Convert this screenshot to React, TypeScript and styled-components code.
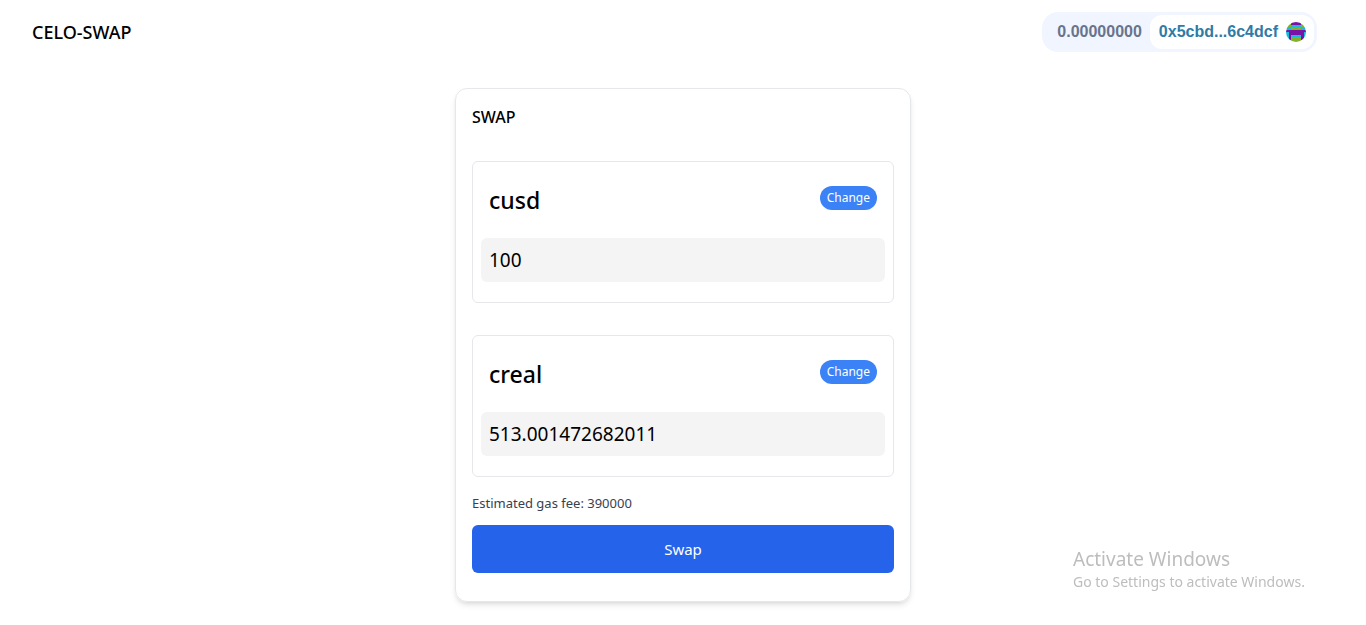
import React, { useState } from "react";
import styled, { createGlobalStyle } from "styled-components";

const GlobalStyle = createGlobalStyle`
  *, *::before, *::after { box-sizing: border-box; }
  body {
    margin: 0;
    background: #fff;
    color: #000;
    font-family: "Segoe UI", "Noto Sans", "Open Sans", sans-serif;
    font-size: 15px;
    line-height: 24px;
  }
  h1, h2, h3, p { margin: 0; font-weight: 500; }
  button, input { font: inherit; border: 0; margin: 0; }
  button { cursor: pointer; }
`;

const Header = styled.header`
  display: flex;
  justify-content: space-between;
  align-items: center;
  padding: 12px 49px 12px 32px;
`;

const Brand = styled.h1`
  font-size: 18px;
  line-height: 28px;
`;

const Wallet = styled.div`
  display: flex;
  align-items: center;
  height: 40px;
  padding: 3px 3px 3px 15px;
  gap: 8px;
  border-radius: 16px;
  background: #f1f5ff;
  font-family: "Liberation Sans", Arial, sans-serif;
  font-size: 16px;
  font-weight: 700;
  color: #68738d;
`;

const Account = styled.button`
  display: flex;
  align-items: center;
  gap: 8px;
  height: 34px;
  padding: 0 8px 0 9px;
  border-radius: 12px;
  background: #fff;
  color: #2e7ba6;
`;

const Card = styled.main`
  width: calc(100% - 32px);
  max-width: 456px;
  margin: 24px auto;
  padding: 16px 16px 28px;
  border: 1px solid #e5e7eb;
  border-radius: 12px;
  box-shadow: 0 4px 6px -1px rgba(0, 0, 0, 0.1), 0 2px 4px -2px rgba(0, 0, 0, 0.1);
`;

const CardTitle = styled.h2`
  margin-bottom: 32px;
  font-size: 16px;
  line-height: 24px;
`;

const TokenBox = styled.section`
  margin-bottom: 32px;
  padding: 8px 8px 20px;
  border: 1px solid #e5e7eb;
  border-radius: 6px;
  &:last-of-type { margin-bottom: 16px; }
`;

const TokenHead = styled.div`
  display: flex;
  justify-content: space-between;
  align-items: flex-start;
  padding: 16px 8px 24px;
`;

const TokenName = styled.h3`
  font-size: 23px;
  line-height: 28px;
`;

const ChangeButton = styled.button`
  height: 24px;
  padding: 0 7px;
  border-radius: 12px;
  background: #3b82f6;
  color: #fff;
  font-size: 12px;
`;

const Amount = styled.input`
  display: block;
  width: 100%;
  height: 44px;
  padding: 8px;
  border-radius: 6px;
  background: #f4f4f4;
  color: #000;
  font-size: 19px;
`;

const GasFee = styled.p`
  margin-bottom: 12px;
  font-size: 13px;
  font-weight: 400;
  line-height: 20px;
  color: #374151;
`;

const SwapButton = styled.button`
  display: block;
  width: 100%;
  height: 48px;
  border-radius: 6px;
  background: #2563eb;
  color: #fff;
`;

const Notice = styled.aside`
  position: fixed;
  right: 57px;
  bottom: 33px;
  min-width: 236px;
  color: #bdbdbd;
  font-size: 14px;
  line-height: 20px;
  pointer-events: none;
`;

const NoticeTitle = styled.div`
  font-size: 19px;
  line-height: 26px;
`;

const colours: Record<string, string> = { p: "#7a12a8", g: "#86b02c", c: "#17bdd8" };
const halfRows = ["ggpp", "ggcc", "ccgg", "pppp", "cppp", "cpcc", "cpgg", "ccgg"];

function Avatar() {
  return (
    <svg width="20" height="20" viewBox="0 0 8 8" aria-hidden="true">
      <defs>
        <clipPath id="round"><circle cx="4" cy="4" r="4" /></clipPath>
      </defs>
      <g clipPath="url(#round)" shapeRendering="crispEdges">
        {halfRows.map((half, y) =>
          [...half, ...half.split("").reverse()].map((c, x) => (
            <rect key={`${x}-${y}`} x={x} y={y} width="1" height="1" fill={colours[c]} />
          ))
        )}
      </g>
    </svg>
  );
}

function TokenField({ name, initial }: { name: string; initial: string }) {
  const [value, setValue] = useState(initial);
  return (
    <TokenBox>
      <TokenHead>
        <TokenName>{name}</TokenName>
        <ChangeButton type="button">Change</ChangeButton>
      </TokenHead>
      <Amount aria-label={`${name} amount`} value={value} onChange={(e) => setValue(e.target.value)} />
    </TokenBox>
  );
}

export default function App() {
  return (
    <>
      <GlobalStyle />
      <Header>
        <Brand>CELO-SWAP</Brand>
        <Wallet>
          <span>0.00000000</span>
          <Account type="button">
            0x5cbd...6c4dcf
            <Avatar />
          </Account>
        </Wallet>
      </Header>
      <Card>
        <CardTitle>SWAP</CardTitle>
        <TokenField name="cusd" initial="100" />
        <TokenField name="creal" initial="513.001472682011" />
        <GasFee>Estimated gas fee: 390000</GasFee>
        <SwapButton type="button">Swap</SwapButton>
      </Card>
      <Notice>
        <NoticeTitle>Activate Windows</NoticeTitle>
        Go to Settings to activate Windows.
      </Notice>
    </>
  );
}
